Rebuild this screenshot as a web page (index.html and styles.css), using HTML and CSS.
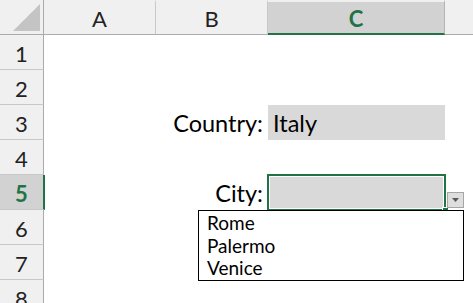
FILE: index.html
```html
<!DOCTYPE html>
<html lang="en">
<head>
  <meta charset="UTF-8">
  <title>Dependent drop-down list</title>
  <link rel="stylesheet" href="styles.css">
</head>
<body>
  <div class="sheet">
    <div class="head corner"><span class="tri"></span></div>
    <div class="head col">A</div>
    <div class="head col">B</div>
    <div class="head col sel">C</div>
    <div class="head col rest"></div>

    <div class="head row">1</div><div class="cell"></div><div class="cell"></div><div class="cell"></div><div class="cell"></div>
    <div class="head row">2</div><div class="cell"></div><div class="cell"></div><div class="cell"></div><div class="cell"></div>
    <div class="head row">3</div><div class="cell"></div><div class="cell label">Country:</div><div class="cell fill">Italy</div><div class="cell"></div>
    <div class="head row">4</div><div class="cell"></div><div class="cell"></div><div class="cell"></div><div class="cell"></div>
    <div class="head row sel">5</div><div class="cell"></div><div class="cell label">City:</div><div class="cell fill active"><span class="handle"></span></div><div class="cell"></div>
    <div class="head row">6</div><div class="cell"></div><div class="cell"></div><div class="cell"></div><div class="cell"></div>
    <div class="head row">7</div><div class="cell"></div><div class="cell"></div><div class="cell"></div><div class="cell"></div>
    <div class="head row">8</div><div class="cell"></div><div class="cell"></div><div class="cell"></div><div class="cell"></div>

    <button class="drop-btn" aria-label="Open list">
      <svg width="7" height="4" viewBox="0 0 7 4"><path d="M0 0h7L3.5 4z" fill="#595959"/></svg>
    </button>
    <ul class="drop-list">
      <li>Rome</li>
      <li>Palermo</li>
      <li>Venice</li>
    </ul>
  </div>
</body>
</html>
```

FILE: styles.css
```css
:root {
  --head: #f0f0f0;
  --head-sel: #d2d2d2;
  --head-line: #c8c8c8;
  --head-edge: #ababab;
  --green: #217346;
  --fill: #d9d9d9;
}
* { box-sizing: border-box; }
body {
  margin: 0;
  background: #fff;
  overflow: hidden;
  font-family: Lato, "Liberation Sans", sans-serif;
  color: #000;
}
.sheet {
  position: relative;
  display: grid;
  grid-template-columns: 44px 112px 112px 177px 1fr;
  grid-auto-rows: 35px;
  width: 473px;
  height: 303px;
}
.head {
  background: var(--head);
  color: #222;
  font-size: 22px;
  display: flex;
  align-items: center;
  justify-content: center;
}
.corner {
  border-right: 1px solid var(--head-edge);
  border-bottom: 1px solid var(--head-edge);
  position: relative;
}
.tri {
  position: absolute;
  right: 3px;
  bottom: 3px;
  width: 27px;
  height: 27px;
  background: #c4c4c4;
  clip-path: polygon(100% 0, 100% 100%, 0 100%);
}
.col {
  border-top: 2px solid var(--head);
  border-right: 1px solid var(--head-line);
  border-bottom: 1px solid var(--head-edge);
  padding-top: 1px;
}
.col.sel {
  background: var(--head-sel);
  color: var(--green);
  font-weight: 700;
  border-right-color: #b4b4b4;
  border-bottom: 2px solid var(--green);
}
.col.rest { border-right: none; }
.row {
  border-right: 1px solid var(--head-edge);
  border-bottom: 1px solid var(--head-line);
  padding-top: 2px;
}
.row.sel {
  background: var(--head-sel);
  color: var(--green);
  font-weight: 700;
  border-right: 2px solid var(--green);
  margin-right: -1px;
  position: relative;
}
.cell {
  display: flex;
  align-items: flex-end;
  font-size: 23.5px;
  line-height: 1;
  padding-bottom: 5px;
}
.label {
  justify-content: flex-end;
  padding-right: 5px;
}
.fill {
  background: var(--fill);
  padding-left: 5px;
}
.active {
  position: relative;
  box-shadow: inset 0 0 0 2px #fff;
}
.active::after {
  content: "";
  position: absolute;
  inset: -1px;
  border: 2px solid var(--green);
}
.handle {
  position: absolute;
  right: -4px;
  bottom: -4px;
  width: 7px;
  height: 7px;
  background: var(--green);
  border: 1px solid #fff;
  z-index: 1;
}
.drop-btn {
  position: absolute;
  left: 447px;
  top: 192px;
  width: 17px;
  height: 16px;
  margin: 0;
  padding: 0;
  background: #dedede;
  border: 1px solid #a6a6a6;
  display: flex;
  align-items: center;
  justify-content: center;
  z-index: 2;
}
.drop-list {
  position: absolute;
  left: 198px;
  top: 210px;
  width: 266px;
  height: 71px;
  margin: 0;
  padding: 1px 0 0 8px;
  list-style: none;
  background: #fff;
  border: 1px solid #000;
  font-size: 19px;
  line-height: 22.5px;
  z-index: 3;
}
```
